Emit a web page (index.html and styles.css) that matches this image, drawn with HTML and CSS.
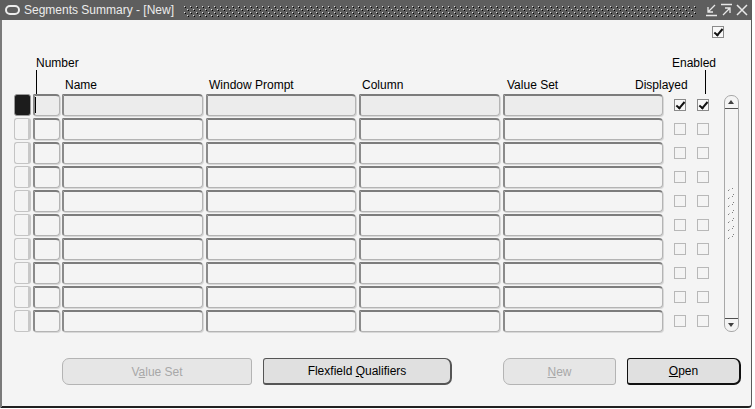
FILE: index.html
```html
<!DOCTYPE html>
<html>
<head>
<meta charset="utf-8">
<link rel="stylesheet" href="styles.css">
</head>
<body>
<div class="window">
  <div class="titlebar">
    <span class="logo"></span>
    <span class="title">Segments Summary - [New]</span>
    <span class="dots"></span>
    <span class="tbicons">
      <svg width="14" height="14" viewBox="0 0 14 14"><path d="M10 2 L3 9 M3 4 V9 H8 M1 12.5 H12" stroke="#e8e8e8" stroke-width="1.3" fill="none"/></svg>
      <svg width="14" height="14" viewBox="0 0 14 14"><path d="M1 1.5 H12 M3 12 L10 5 M5 5 H10 V10" stroke="#e8e8e8" stroke-width="1.3" fill="none"/></svg>
      <svg width="14" height="14" viewBox="0 0 14 14"><path d="M2 2 L12 12 M12 2 L2 12" stroke="#e8e8e8" stroke-width="1.5" fill="none"/></svg>
    </span>
  </div>
  <div class="content">
    <div class="toprow"><span class="cb checked"></span></div>
    <div class="labels">
      <span class="lbl-number">Number</span>
      <span class="lbl-enabled">Enabled</span>
    </div>
    <div class="headers">
      <span class="h h-name">Name</span>
      <span class="h h-prompt">Window Prompt</span>
      <span class="h h-column">Column</span>
      <span class="h h-vset">Value Set</span>
      <span class="h h-disp">Displayed</span>
    </div>
    <div class="block">
      <div class="grid" id="grid"></div>
      <div class="scroll">
        <span class="up"></span>
        <span class="grip"></span>
        <span class="down"></span>
      </div>
    </div>
    <div class="buttons">
      <button class="btn disabled b-vset">V<u>a</u>lue Set</button>
      <button class="btn b-flex">Flexfield <u>Q</u>ualifiers</button>
      <button class="btn disabled b-new"><u>N</u>ew</button>
      <button class="btn default b-open"><u>O</u>pen</button>
    </div>
  </div>
</div>
<script>
  var g = document.getElementById('grid');
  var html = '';
  for (var i = 0; i < 10; i++) {
    var cur = i === 0 ? ' cur' : '';
    html += '<span class="ind' + cur + '"></span>' +
      '<span class="f f-num' + cur + '">' + (i === 0 ? '<i class="caret"></i>' : '') + '</span>' +
      '<span class="f f-mid' + cur + '"></span>' +
      '<span class="f f-mid' + cur + '"></span>' +
      '<span class="f f-mid' + cur + '"></span>' +
      '<span class="f f-last' + cur + '"></span>' +
      '<span class="cbcell"><span class="cb' + (i === 0 ? ' checked' : ' off') + '"></span></span>' +
      '<span class="cbcell"><span class="cb' + (i === 0 ? ' checked' : ' off') + '"></span></span>';
  }
  g.innerHTML = html;
</script>
</body>
</html>
```
FILE: styles.css
```css
* { box-sizing: border-box; }
html, body { margin: 0; padding: 0; background: #ffffff; }
body {
  font-family: "Liberation Sans", Arial, sans-serif;
  font-size: 12px;
  color: #000;
}
.window {
  width: 752px;
  height: 408px;
  background: #f4f4f4;
  border-left: 2px solid #7a7a7a;
  border-right: 1px solid #5a5a5a;
  border-bottom: 2px solid #202020;
  border-bottom-right-radius: 4px;
  display: flex;
  flex-direction: column;
}
.titlebar {
  height: 20px;
  background: #5e5e5e;
  display: flex;
  align-items: center;
  color: #ececec;
  font-size: 12px;
  padding-left: 2px;
  margin-left: -2px;
}
.logo {
  width: 15px;
  height: 10px;
  border: 2px solid #ececec;
  border-radius: 5px;
  margin-left: 3px;
  margin-right: 4px;
}
.title { white-space: nowrap; }
.dots {
  flex: 1;
  height: 11px;
  margin: 2px 8px 0 10px;
  background-image: url("data:image/svg+xml;utf8,<svg xmlns='http://www.w3.org/2000/svg' width='6' height='6'><rect x='0' y='0' width='1' height='1' fill='%23e0e0e0'/><rect x='1' y='1' width='1' height='1' fill='%23000000'/><rect x='3' y='3' width='1' height='1' fill='%23e0e0e0'/><rect x='4' y='4' width='1' height='1' fill='%23000000'/></svg>");
  background-size: 6px 6px;
  background-repeat: repeat;
}
.tbicons { display: flex; gap: 1px; margin-right: 2px; }
.content { flex: 1; display: flex; flex-direction: column; }
.toprow {
  display: flex;
  justify-content: flex-end;
  padding: 6px 27px 0 0;
  height: 30px;
}
.labels {
  display: flex;
  justify-content: space-between;
  height: 22px;
  padding: 6px 35px 0 34px;
  line-height: 14px;
}
.lbl-number, .lbl-enabled { position: relative; }
.lbl-number::after {
  content: "";
  position: absolute;
  left: 0px;
  top: 14px;
  width: 1px;
  height: 24px;
  background: #000;
}
.lbl-enabled::after {
  content: "";
  position: absolute;
  right: 10px;
  top: 14px;
  width: 1px;
  height: 24px;
  background: #000;
}
.headers {
  height: 22px;
  display: flex;
  line-height: 14px;
  padding-top: 6px;
}
.h { display: block; }
.h-name { margin-left: 63px; width: 144px; }
.h-prompt { width: 153px; }
.h-column { width: 145px; }
.h-vset { width: 128px; }
.block {
  display: flex;
  height: 238px;
}
.grid {
  margin-left: 12px;
  display: grid;
  grid-template-columns: 19px 29px 144px 153px 144px 171px 23px 23px;
  column-gap: 0;
  grid-auto-rows: 22px;
  row-gap: 2px;
  align-content: start;
}
.ind {
  margin-right: 2px;
  border: 1px solid #c4c4c4;
  border-right: 3px solid #c8c8c8;
  border-radius: 3px;
  background: #f4f4f4;
}
.ind.cur {
  background: #1c1c1c;
  border: 1px solid #9a9a9a;
}
.f {
  display: block;
  position: relative;
  background: #f4f4f4;
  border: 1px solid #b4b4b4;
  border-top: 2px solid #7c7c7c;
  border-left: 2px solid #8a8a8a;
  border-radius: 1px 4px 4px 3px;
  box-shadow: 1px 1px 0 #d8d8d8;
}
.f-num { margin-right: 2px; }
.f-mid { margin-right: 3px; }
.f-last { margin-right: 11px; }
.f.cur { background: #ececec; }
.caret {
  position: absolute;
  left: 0px;
  top: 1px;
  width: 1px;
  height: 16px;
  background: #000;
}
.cbcell { display: flex; align-items: center; }
.cb {
  display: inline-block;
  width: 12px;
  height: 12px;
  border: 1px solid #8a8a8a;
  background: #f8f8f8;
  position: relative;
}
.cb.off { border-color: #b8b8b8; background: #f4f4f4; }
.cb.checked::after {
  content: "";
  position: absolute;
  left: 3px;
  top: 0px;
  width: 3px;
  height: 7px;
  border-right: 2px solid #111;
  border-bottom: 2px solid #111;
  transform: rotate(40deg);
}
.scroll {
  margin-left: 4px;
  margin-top: 1px;
  width: 15px;
  height: 237px;
  border: 1px solid #a8a8a8;
  border-radius: 7px;
  display: flex;
  flex-direction: column;
  justify-content: space-between;
  align-items: center;
}
.up, .down {
  width: 13px;
  height: 13px;
  position: relative;
}
.up { border-bottom: 1px solid #505050; }
.down { border-top: 1px solid #505050; }
.up::after {
  content: "";
  position: absolute;
  left: 3px;
  top: 4px;
  border-left: 3px solid transparent;
  border-right: 3px solid transparent;
  border-bottom: 4px solid #404040;
}
.down::after {
  content: "";
  position: absolute;
  left: 3px;
  top: 4px;
  border-left: 3px solid transparent;
  border-right: 3px solid transparent;
  border-top: 4px solid #404040;
}
.grip {
  width: 8px;
  height: 52px;
  background-image: url("data:image/svg+xml;utf8,<svg xmlns='http://www.w3.org/2000/svg' width='8' height='8'><rect x='0' y='2' width='1' height='1' fill='%23808080'/><rect x='4' y='0' width='1' height='1' fill='%23808080'/><rect x='1' y='1' width='1' height='1' fill='%23c0c0c0'/><rect x='5' y='6' width='1' height='1' fill='%23808080'/></svg>");
  background-size: 8px 8px;
}
.buttons {
  display: flex;
  padding: 26px 0 0 60px;
}
.btn {
  font-family: "Liberation Sans", Arial, sans-serif;
  font-size: 12px;
  height: 27px;
  background: #e0e0e0;
  border: 1px solid #6a6a6a;
  border-radius: 3px 7px 7px 3px;
  color: #000;
  padding: 0;
}
.btn u { text-decoration: underline; }
.btn.disabled {
  color: #a8a8a8;
  background: #e6e6e6;
  border-color: #b4b4b4;
  border-radius: 7px 3px 3px 7px;
}
.b-vset { width: 190px; }
.b-flex { width: 189px; margin-left: 11px; border-right-width: 2px; border-bottom-width: 2px; border-color: #555; }
.b-new { width: 113px; margin-left: 51px; }
.b-open { width: 114px; margin-left: 11px; border: 2px solid #111; border-top-width: 1px; border-left-width: 1px; border-radius: 3px 7px 7px 3px; }
```
